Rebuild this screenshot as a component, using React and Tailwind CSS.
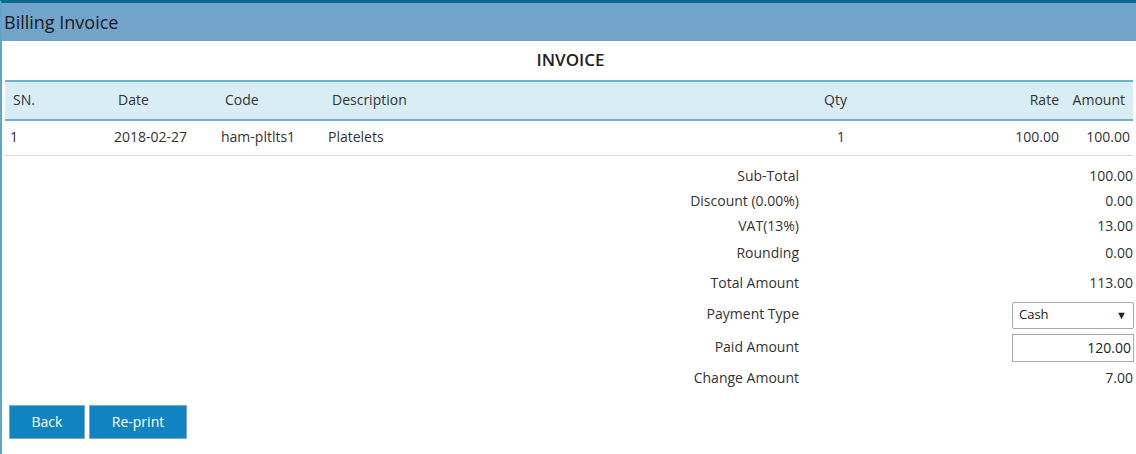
import React from "react";

const summary = [
  { label: "Sub-Total", value: "100.00", h: "h-[25px]" },
  { label: "Discount (0.00%)", value: "0.00", h: "h-[25px]" },
  { label: "VAT(13%)", value: "13.00", h: "h-[25px]" },
  { label: "Rounding", value: "0.00", h: "h-[30px]" },
  { label: "Total Amount", value: "113.00", h: "h-[30px]" },
];

export default function App() {
  return (
    <div className="w-[1136px] h-[454px] bg-white font-['Open_Sans',sans-serif] text-[14px] text-[#333] border-t-[3px] border-[#0b6a8e] border-l-2 border-l-[#5fa7c9] overflow-hidden">
      <div className="h-[38px] bg-[#73a5cc] flex items-center px-[2px]">
        <span className="text-[18px] text-[#1a1a1a]">Billing Invoice</span>
      </div>

      <div className="pl-[3px]">
        <div className="h-[39px] flex items-center justify-center pb-[2px]">
          <span className="text-[17px] font-semibold text-[#222]">INVOICE</span>
        </div>

        <table className="w-[1128px] border-collapse table-fixed">
          <thead>
            <tr className="bg-[#d9edf4] border-t-2 border-b-2 border-[#6cb2d0] h-[39px]">
              <th className="text-left font-medium pl-[8px] pb-[3px] w-[104px]">SN.</th>
              <th className="text-left font-medium pl-[9px] pb-[3px] w-[107px]">Date</th>
              <th className="text-left font-medium pl-[9px] pb-[3px] w-[107px]">Code</th>
              <th className="text-left font-medium pl-[9px] pb-[3px]">Description</th>
              <th className="text-right font-medium pr-[0px] pb-[3px] w-[60px]">Qty</th>
              <th className="text-right font-medium pr-[2px] pb-[3px] w-[214px]">Rate</th>
              <th className="text-right font-medium pr-[8px] pb-[3px] w-[72px]">Amount</th>
            </tr>
          </thead>
          <tbody>
            <tr className="h-[35px] border-b border-[#dddddd]">
              <td className="pl-[5px] pb-[3px]">1</td>
              <td className="pl-[5px] pb-[3px]">2018-02-27</td>
              <td className="pl-[5px] pb-[3px]">ham-pltlts1</td>
              <td className="pl-[5px] pb-[3px]">Platelets</td>
              <td className="text-right pr-[2px] pb-[3px]">1</td>
              <td className="text-right pr-[2px] pb-[3px]">100.00</td>
              <td className="text-right pr-[3px] pb-[3px]">100.00</td>
            </tr>
          </tbody>
        </table>

        <div className="pt-[7px] flex flex-col">
          {summary.map((r) => (
            <div key={r.label} className={`flex items-center ${r.h}`}>
              <div className="w-[794px] text-right">{r.label}</div>
              <div className="w-[334px] text-right">{r.value}</div>
            </div>
          ))}
          <div className="flex items-center h-[32px]">
            <div className="w-[794px] text-right">Payment Type</div>
            <div className="w-[335px] flex justify-end">
              <div className="w-[122px] h-[27px] border border-[#a9a9a9] rounded-[2px] flex items-center justify-between px-[6px] text-[13px] text-[#222] mt-[3px]">
                <span>Cash</span>
                <span className="text-[11px]">▼</span>
              </div>
            </div>
          </div>
          <div className="flex items-center h-[33px]">
            <div className="w-[794px] text-right">Paid Amount</div>
            <div className="w-[335px] flex justify-end">
              <div className="w-[122px] h-[28px] border border-[#a9a9a9] flex items-center justify-end px-[2px] text-[#222] mt-[3px]">
                120.00
              </div>
            </div>
          </div>
          <div className="flex items-center h-[30px]">
            <div className="w-[794px] text-right">Change Amount</div>
            <div className="w-[334px] text-right">7.00</div>
          </div>
        </div>

        <div className="flex gap-[4px] pl-[4px] pt-[12px]">
          <button className="w-[76px] h-[34px] bg-[#0f84c0] border border-[#7fa9c4] text-white text-[14px]">Back</button>
          <button className="w-[98px] h-[34px] bg-[#0f84c0] border border-[#7fa9c4] text-white text-[14px]">Re-print</button>
        </div>
      </div>
    </div>
  );
}
